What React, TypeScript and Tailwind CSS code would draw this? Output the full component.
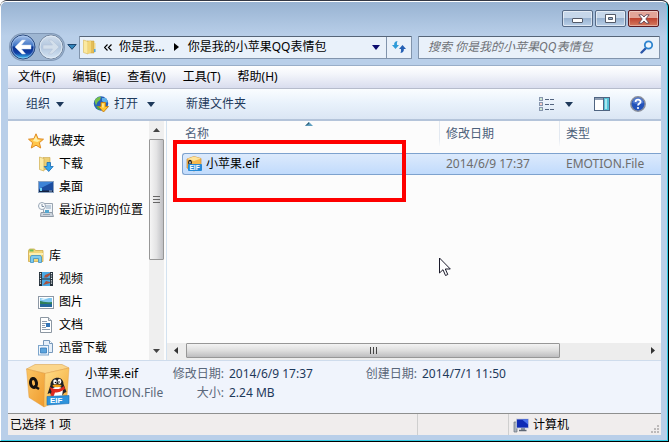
import type { ReactNode } from "react";

type NavItem = { label: string; icon: ReactNode };

function Caret({ className = "text-[#1e395b]" }: { className?: string }) {
  return (
    <svg width="8" height="5" viewBox="0 0 8 5" className={className} aria-hidden="true">
      <path d="M0 0h8L4 5z" fill="currentColor" />
    </svg>
  );
}

function BackIcon() {
  return (
    <svg width="26" height="26" viewBox="0 0 26 26" aria-hidden="true">
      <defs>
        <linearGradient id="back" x1="0" y1="0" x2="0" y2="1">
          <stop offset="0" stopColor="#a9c4ec" />
          <stop offset=".45" stopColor="#3f74c4" />
          <stop offset=".5" stopColor="#0b3591" />
          <stop offset=".75" stopColor="#123fa5" />
          <stop offset="1" stopColor="#3fd0fa" />
        </linearGradient>
      </defs>
      <circle cx="13" cy="13" r="12" fill="url(#back)" stroke="#2a4a80" />
      <circle cx="13" cy="13" r="11" fill="none" stroke="#b8d2f3" strokeOpacity=".55" />
      <path d="M5 13l7-7h3.500l-4 5H21v4h-9.500l4 5H12z" fill="#fff" stroke="#c9d8ee" strokeWidth=".5" />
    </svg>
  );
}

function ForwardIcon() {
  return (
    <svg width="26" height="26" viewBox="0 0 26 26" aria-hidden="true">
      <defs>
        <linearGradient id="fwd" x1="0" y1="0" x2="0" y2="1">
          <stop offset="0" stopColor="#d3dfed" />
          <stop offset=".5" stopColor="#b1c6de" />
          <stop offset="1" stopColor="#d6e5f4" />
        </linearGradient>
      </defs>
      <circle cx="13" cy="13" r="12" fill="url(#fwd)" stroke="#75879f" />
      <circle cx="13" cy="13" r="11" fill="none" stroke="#e6eff8" strokeOpacity=".8" />
      <path d="M21 13l-7-7h-3.500l4 5H5v4h9.500l-4 5H14z" fill="#d3dfeb" stroke="#b5c5d8" strokeWidth=".6" />
    </svg>
  );
}

function FolderIcon() {
  return (
    <svg width="16" height="16" viewBox="0 0 16 16" aria-hidden="true">
      <path d="M5 2h7v12H5z" fill="#e3bd58" stroke="#c79d3a" strokeWidth=".5" />
      <path d="M12 4h1.500v9H12z" fill="#f0d98c" />
      <path d="M12 10h1.500v3H12z" fill="#4ea5e6" />
      <path d="M1.500 1L6 2.500V15l-4.500-1.500z" fill="#fbe9a0" stroke="#d8b658" strokeWidth=".6" />
      <path d="M6 2.500l3-1v12L6 15z" fill="#f3d678" />
    </svg>
  );
}

function RefreshIcon() {
  return (
    <svg width="14" height="14" viewBox="0 0 14 14" aria-hidden="true">
      <path d="M5.500 1C2.500 1.500 2 3 2.200 5H0l3.500 4L7 5H5c-.2-1.600 0-2.800.5-4z" fill="#2f9bd8" />
      <path d="M8.500 13c3-.5 3.500-2 3.300-4H14l-3.500-4L7 9h2c.2 1.600 0 2.800-.5 4z" fill="#2560b4" />
    </svg>
  );
}

function SearchIcon() {
  return (
    <svg width="14" height="14" viewBox="0 0 14 14" aria-hidden="true">
      <path d="M6 8L1.500 12.500" stroke="#2b56a8" strokeWidth="2.400" strokeLinecap="round" />
      <circle cx="8.500" cy="5" r="3.700" fill="#eef6fd" stroke="#2e84cf" strokeWidth="1.800" />
    </svg>
  );
}

function GlobeIcon() {
  return (
    <svg width="17" height="17" viewBox="0 0 17 17" aria-hidden="true">
      <circle cx="8" cy="7.500" r="7.200" fill="#2760b8" />
      <path d="M1.500 5C3 1.500 6 .5 8 .8L7 4 4.500 6 3 9.500z" fill="#75c04a" />
      <path d="M9 2l4 0 2 4-3 1-3-2z" fill="#5eb0e8" />
      <path d="M3 10l3 0 1 4-2-.5z" fill="#4fa544" />
      <path d="M8 6.500h4.500v4h3L10.500 16 5.500 10.500H8z" fill="#ffc52f" stroke="#c77e12" strokeWidth=".9" />
      <path d="M9.200 7.500h1.500v4H9.200z" fill="#fff0a8" />
    </svg>
  );
}

function ViewIcon() {
  return (
    <svg width="16" height="14" viewBox="0 0 16 14" aria-hidden="true">
      {[0.5, 5.5, 10.5].map((y, i) => (
        <g key={y}>
          <rect x=".5" y={y} width="3" height="3" fill="#fff" stroke="#8796ad" />
          <rect x="1.500" y={y + 1} width="1" height="1" fill={i === 1 ? "#d23c2c" : "#3f9a52"} />
          <path d={`M6 ${y + 2}h4M11 ${y + 2}h4`} stroke="#52647f" />
        </g>
      ))}
    </svg>
  );
}

function PaneIcon() {
  return (
    <svg width="16" height="14" viewBox="0 0 16 14" aria-hidden="true">
      <rect x=".5" y=".5" width="15" height="13" fill="#fff" stroke="#4f6481" />
      <path d="M1 2h14" stroke="#8d9db3" strokeWidth="2" />
      <rect x="10" y="1" width="5" height="12" fill="#55c2d7" />
      <path d="M11 2h2v10h-2z" fill="#aae7ef" />
      <path d="M9.500 1v12" stroke="#4f6481" />
    </svg>
  );
}

function HelpIcon() {
  return (
    <svg width="16" height="16" viewBox="0 0 16 16" aria-hidden="true">
      <circle cx="8" cy="8" r="7.200" fill="#2352ba" stroke="#8a8f9c" strokeWidth="1.500" />
      <path d="M2.500 7a5.500 5.500 0 0 1 11 0c-3 1.300-7 1.300-11 0z" fill="#6f94df" fillOpacity=".6" />
      <path d="M5.600 6c0-3.200 5-3 5-.3C10.600 7.500 8 7.400 8 9.500" fill="none" stroke="#fff" strokeWidth="1.800" />
      <circle cx="8" cy="12" r="1.100" fill="#fff" />
    </svg>
  );
}

function StarIcon() {
  return (
    <svg width="16" height="16" viewBox="0 0 16 16" aria-hidden="true">
      <path d="M8 .8l2.100 4.900 5.400.5-4.100 3.500 1.300 5.300L8 12.200 3.300 15l1.300-5.300L.5 6.200l5.400-.5z" fill="#ffc64a" stroke="#e08a20" strokeLinejoin="round" />
      <path d="M8 3l1.300 3.600 3.200.3-3 2L5 8z" fill="#fff0a6" />
    </svg>
  );
}

function DownloadFolderIcon() {
  return (
    <svg width="16" height="16" viewBox="0 0 16 16" aria-hidden="true">
      <path d="M5 1.500h7v12H5z" fill="#ecce74" stroke="#c9a548" strokeWidth=".6" />
      <path d="M1.500 1L6 2.500V15l-4.500-1.500z" fill="#fbeaa6" stroke="#d0ae50" strokeWidth=".7" />
      <path d="M9 6.500h3.500v4h2.700L10.700 15.500 6.200 10.500H9z" fill="#35a4ee" stroke="#1769b4" strokeWidth=".8" />
    </svg>
  );
}

function DesktopIcon() {
  return (
    <svg width="16" height="16" viewBox="0 0 16 16" aria-hidden="true">
      <rect x=".5" y="2.500" width="15" height="11" fill="#1c4da0" stroke="#8ca3c1" />
      <path d="M1 3h14L1 10z" fill="#3d83d6" />
      <path d="M1 11.500h14v1.500H1z" fill="#12213e" />
      <path d="M2 9h2v3H2z" fill="#75d6f6" />
      <path d="M11 12h3" stroke="#9db8dc" />
    </svg>
  );
}

function RecentIcon() {
  return (
    <svg width="16" height="16" viewBox="0 0 16 16" aria-hidden="true">
      <path d="M5.500 1.500h9v10h-9z" fill="#f0f4f8" stroke="#9aa5b1" />
      <path d="M7 4h6M8 6h5" stroke="#8ea7bf" />
      <path d="M3 10.500h11l1.500 4h-13z" fill="#cdd5de" stroke="#8f9aa7" />
      <path d="M7 8h4v3H7z" fill="#55a7cf" />
      <path d="M5 12.500h7" stroke="#98a4b0" />
      <circle cx="4" cy="4" r="3.500" fill="#f8fbfd" stroke="#9aa7b6" />
      <path d="M4 2v2.500h2" fill="none" stroke="#61758b" strokeWidth=".8" />
    </svg>
  );
}

function LibraryIcon() {
  return (
    <svg width="16" height="16" viewBox="0 0 16 16" aria-hidden="true">
      <path d="M.5 2.500l1-1.500h5l1 1.500h7.500v11H.5z" fill="#f2d777" stroke="#cfa94a" strokeWidth=".8" />
      <path d="M1.500 1.500h4v2h-4z" fill="#70bd55" />
      <path d="M1 5h14v2H1z" fill="#fcefb2" />
      <path d="M2.500 14.500V9l1-1.500h9l1 1.500v5.500h-3v-4h-5v4z" fill="#7ecbee" stroke="#3d92c4" strokeWidth=".8" />
    </svg>
  );
}

function VideoIcon() {
  return (
    <svg width="16" height="16" viewBox="0 0 16 16" aria-hidden="true">
      <path d="M1 1h14v14H1z" fill="#25313b" />
      <path d="M2.500 2v12M13.500 2v12" stroke="#e8eef2" strokeWidth="1.200" strokeDasharray="1.200 1.200" />
      <path d="M4 1h8v6.500H4zM4 8.500h8V15H4z" fill="#4ba9e4" />
      <path d="M7 4l5-2v2L9 6.500H6zM5 14l3-4 4 1v1z" fill="#a9513c" />
    </svg>
  );
}

function PictureIcon() {
  return (
    <svg width="16" height="16" viewBox="0 0 16 16" aria-hidden="true">
      <rect x=".5" y="2.500" width="15" height="12" fill="#fff" stroke="#8d98a5" />
      <path d="M2 4h12v9H2z" fill="#7fc6f0" />
      <path d="M2 7c3 0 5 2 12 1v2H2z" fill="#2d7f5b" />
      <path d="M2 10h12v3H2z" fill="#23669b" />
      <path d="M2 5l4-1h5l-6 2z" fill="#e5f6fd" />
    </svg>
  );
}

function DocumentIcon() {
  return (
    <svg width="16" height="16" viewBox="0 0 16 16" aria-hidden="true">
      <path d="M2.500.5h8l3 3v12h-11z" fill="#fff" stroke="#8c97a2" />
      <path d="M10.500.5v3h3" fill="#dde4ea" stroke="#8c97a2" />
      <path d="M4 4.500h5M4 6.500h4M4 8.500h3M4 10.500h4M4 12.500h8" stroke="#8f9eb0" />
      <path d="M8 6h4v4H8z" fill="#3475b8" />
    </svg>
  );
}

function ThunderIcon() {
  return (
    <svg width="16" height="16" viewBox="0 0 16 16" aria-hidden="true">
      <path d="M5.500.5h6l3 3v9h-9z" fill="#e6f0fa" stroke="#7798ba" />
      <path d="M11.500.5v3h3" fill="#fff" stroke="#7798ba" />
      <rect x=".5" y="5.500" width="10" height="9.500" fill="#eef6fd" stroke="#7ea6cc" />
      <path d="M2.500 8h6v5h-6z" fill="#5ba4dd" stroke="#3679b8" strokeWidth=".8" />
    </svg>
  );
}

function EifIcon({ className }: { className: string }) {
  return (
    <svg viewBox="0 0 44 44" className={className} aria-hidden="true">
      <defs>
        <linearGradient id="boxLeft" x1="0" y1="0" x2="1" y2="1">
          <stop offset="0" stopColor="#fbc665" />
          <stop offset="1" stopColor="#ef9a2c" />
        </linearGradient>
        <linearGradient id="boxRight" x1="0" y1="0" x2="1" y2="1">
          <stop offset="0" stopColor="#ffdf8c" />
          <stop offset="1" stopColor="#f3a733" />
        </linearGradient>
      </defs>
      <path d="M.5 5L9 .5h27l7 3.500-24 5.500z" fill="#fbd68c" stroke="#dba552" strokeWidth=".6" />
      <path d="M.5 5L19 9.500 18 43 3 33.500z" fill="url(#boxLeft)" stroke="#dd9638" strokeWidth=".4" />
      <path d="M19 9.500L43 4l-2 29-23 10z" fill="url(#boxRight)" stroke="#dd9638" strokeWidth=".4" />
      <ellipse cx="7.500" cy="19" rx="3" ry="4.500" fill="none" stroke="#17130f" strokeWidth="3" transform="rotate(-10 7.500 19)" />
      <path d="M8 22l5 3" stroke="#17130f" strokeWidth="2.500" />
      <path d="M24.500 21c0-9 13-10 13-1l3 8-2.500 1c-2 5-12 5-14 0l-2.500 1z" fill="#202126" />
      <path d="M26 25c3-3 8-3 11 0l-1 8h-9z" fill="#fff" />
      <ellipse cx="29" cy="18" rx="1.800" ry="2.400" fill="#fff" />
      <ellipse cx="33.500" cy="17.500" rx="1.800" ry="2.400" fill="#fff" />
      <circle cx="29.500" cy="18.500" r=".8" />
      <circle cx="33" cy="18" r=".8" />
      <ellipse cx="31" cy="21.800" rx="4.500" ry="1.400" fill="#f5a117" />
      <path d="M23.500 22.500c5 4 11 3 14.500-.5l1 3c-4 3-8 3.500-10 3.500l-1.500 4-3-1 1-4z" fill="#e02a20" />
      <path d="M21 32.500l22-1v8l-22 1.500z" fill="#2d93dc" stroke="#1a6db4" strokeWidth=".6" />
      <text x="24" y="39" fontSize="8" fontWeight="700" fill="#fff" fontFamily="Liberation Sans, sans-serif">
        EIF
      </text>
    </svg>
  );
}

function SmallEifIcon() {
  return (
    <svg width="17" height="16" viewBox="0 0 17 16" aria-hidden="true">
      <path d="M1 3l7-2.500 7 2v9L8 15l-7-3z" fill="#f6b84c" stroke="#cc882a" strokeWidth=".7" />
      <path d="M1 3l7-2.500 7 2-7 2.500z" fill="#ffe39a" />
      <ellipse cx="4" cy="6.500" rx="1.300" ry="2" fill="#fff" stroke="#1b1712" strokeWidth="1.300" />
      <rect x="2" y="8" width="14" height="7" rx="1" fill="#2589d6" />
      <text x="3.500" y="14" fontSize="6.500" fontWeight="700" fill="#fff" fontFamily="Liberation Sans, sans-serif">
        EIF
      </text>
    </svg>
  );
}

function ComputerIcon() {
  return (
    <svg width="16" height="16" viewBox="0 0 16 16" aria-hidden="true">
      <path d="M1 5h3v10H1z" fill="#aab2bd" stroke="#6c7480" strokeWidth=".7" />
      <rect x="3.500" y="2" width="12" height="9" fill="#0f2bb5" stroke="#c5cddb" strokeWidth=".8" />
      <path d="M9 2.500h6v5z" fill="#4b72ec" />
      <path d="M8 11h4v2H8z" fill="#8a94a3" />
      <path d="M6 13.500h7.500" stroke="#5c6674" strokeWidth="1.500" />
    </svg>
  );
}

const favorites: NavItem[] = [
  { label: "下载", icon: <DownloadFolderIcon /> },
  { label: "桌面", icon: <DesktopIcon /> },
  { label: "最近访问的位置", icon: <RecentIcon /> },
];

const libraries: NavItem[] = [
  { label: "视频", icon: <VideoIcon /> },
  { label: "图片", icon: <PictureIcon /> },
  { label: "文档", icon: <DocumentIcon /> },
  { label: "迅雷下载", icon: <ThunderIcon /> },
];

const menus = ["文件(F)", "编辑(E)", "查看(V)", "工具(T)", "帮助(H)"];

function TitleBar() {
  const button =
    "flex h-[17px] w-[31px] items-center justify-center rounded-[2px] border border-[#566a86] bg-linear-to-b from-[#c6d7ea] from-45% via-[#98b2d0] via-50% to-[#bad0e8] shadow-[inset_0_0_0_1px_#ffffff88]";
  return (
    <header className="flex h-8 justify-end gap-[2px] pt-2 pr-[2px]">
      <button type="button" aria-label="最小化" className={button}>
        <span className="mt-1 h-[5px] w-[11px] rounded-[1px] border border-[#535a68] bg-white" />
      </button>
      <button type="button" aria-label="最大化" className={button}>
        <svg width="11" height="9" viewBox="0 0 11 9" aria-hidden="true">
          <path d="M.5.500h10v8H.5zM3.500 3.500h4v2h-4z" fill="#fff" fillRule="evenodd" stroke="#535a68" />
        </svg>
      </button>
      <button
        type="button"
        aria-label="关闭"
        className="flex h-[17px] w-[31px] items-center justify-center rounded-[2px] border border-[#5b1a22] bg-linear-to-b from-[#e3a498] from-45% via-[#bf4330] via-50% to-[#d47a60] shadow-[inset_0_0_0_1px_#ffffff66]"
      >
        <svg width="12" height="10" viewBox="0 0 12 10" aria-hidden="true">
          <path d="M.8.800h3.200l2 2.200 2-2.200h3.200L7.800 5l3.400 4.200H8L6 7 4 9.200H.8L4.200 5z" fill="#fff" stroke="#5c4250" strokeWidth=".9" />
        </svg>
      </button>
    </header>
  );
}

function AddressRow() {
  return (
    <div className="flex items-center pr-px pl-[2px]">
      <nav className="flex w-[69px] shrink-0 items-center" aria-label="导航">
        <div className="flex gap-[2px] rounded-full bg-[#9eb6d2] shadow-[0_0_0_1px_#8198b6]">
          <button type="button" aria-label="后退">
            <BackIcon />
          </button>
          <button type="button" aria-label="前进">
            <ForwardIcon />
          </button>
        </div>
        <button type="button" aria-label="最近页面" className="ml-[3px]">
          <svg width="10" height="6" viewBox="0 0 10 6" aria-hidden="true">
            <path d="M.8.500h8.400L5 5.300z" fill="#3286bd" stroke="#1d4670" />
          </svg>
        </button>
      </nav>
      <div className="mr-[6px] flex h-[23px] w-[333px] shrink-0 rounded-[1px] border border-[#8194ac] border-t-[#566578] bg-[#e9f1fa]">
        <div className="flex flex-1 items-center pl-[2px]">
          <FolderIcon />
          <button type="button" aria-label="上级目录" className="ml-[6px]">
            <svg width="8" height="7" viewBox="0 0 8 7" aria-hidden="true">
              <path d="M3.500.5l-3 3 3 3M7.500.5l-3 3 3 3" fill="none" stroke="#000" strokeWidth="1.200" />
            </svg>
          </button>
          <button type="button" className="ml-[7px]">
            你是我...
          </button>
          <svg width="5" height="8" viewBox="0 0 5 8" className="mx-[9px]" aria-hidden="true">
            <path d="M0 0v8l5-4z" />
          </svg>
          <button type="button">你是我的小苹果QQ表情包</button>
          <button type="button" aria-label="历史记录" className="mr-[6px] ml-auto">
            <Caret className="text-[#0b0b6e]" />
          </button>
        </div>
        <button type="button" aria-label="刷新" className="flex w-[25px] items-center justify-center border-l border-[#8194ac]">
          <RefreshIcon />
        </button>
      </div>
      <label className="flex h-[23px] min-w-0 flex-1 items-center rounded-[1px] border border-[#8194ac] border-t-[#566578] bg-[#e9f1fa] pr-[5px] pl-[9px]">
        <input
          type="search"
          aria-label="搜索"
          placeholder="搜索 你是我的小苹果QQ表情包"
          className="min-w-0 flex-1 bg-transparent italic outline-none placeholder:text-[#6f7277]"
        />
        <SearchIcon />
      </label>
    </div>
  );
}

function Toolbar() {
  return (
    <div className="flex h-8 items-center border-b-2 border-[#b4c4da] bg-linear-to-b from-[#fafdff] via-[#e8f1fb] via-50% to-[#dbe6f4] pr-[15px] pl-[18px] text-[#1e395b]">
      <button type="button" className="flex items-center gap-[6px]">
        组织
        <Caret />
      </button>
      <button type="button" className="ml-[29px] flex items-center gap-1">
        <GlobeIcon />
        打开
      </button>
      <button type="button" aria-label="打开方式" className="ml-[9px]">
        <Caret />
      </button>
      <button type="button" className="ml-[31px]">
        新建文件夹
      </button>
      <div className="ml-auto flex items-center">
        <button type="button" aria-label="更改视图">
          <ViewIcon />
        </button>
        <button type="button" aria-label="更多选项" className="ml-[10px]">
          <Caret />
        </button>
        <button type="button" aria-label="预览窗格" className="ml-[21px]">
          <PaneIcon />
        </button>
        <button type="button" aria-label="帮助" className="ml-5">
          <HelpIcon />
        </button>
      </div>
    </div>
  );
}

function NavGroup({ label, icon, items }: NavItem & { items: NavItem[] }) {
  return (
    <li>
      <a href="#" className="flex h-[23px] items-center gap-[5px] pl-5">
        {icon}
        {label}
      </a>
      <ul>
        {items.map((item) => (
          <li key={item.label}>
            <a href="#" className="flex h-[23px] items-center gap-[5px] pl-[30px] whitespace-nowrap">
              {item.icon}
              {item.label}
            </a>
          </li>
        ))}
      </ul>
    </li>
  );
}

function NavPane() {
  return (
    <aside className="flex w-[159px] shrink-0 border-r border-[#d3e2f0] pr-[2px]">
      <ul className="flex flex-1 flex-col gap-[23px] pt-2">
        <NavGroup label="收藏夹" icon={<StarIcon />} items={favorites} />
        <NavGroup label="库" icon={<LibraryIcon />} items={libraries} />
      </ul>
      <div className="flex w-[15px] flex-col items-center bg-[#efefef]">
        <svg width="7" height="4" viewBox="0 0 7 4" className="my-[7px]" aria-hidden="true">
          <path d="M0 4h7L3.500 0z" fill="#444" />
        </svg>
        <div className="flex h-[121px] w-full flex-col items-center justify-center gap-[2px] rounded-[1px] border border-[#979797] bg-linear-to-r from-[#f5f5f5] via-[#e3e3e4] to-[#bfc0c4]">
          <span className="h-px w-[7px] bg-[#666]" />
          <span className="h-px w-[7px] bg-[#666]" />
          <span className="h-px w-[7px] bg-[#666]" />
        </div>
        <svg width="7" height="4" viewBox="0 0 7 4" className="mt-auto mb-[7px]" aria-hidden="true">
          <path d="M0 0h7L3.500 4z" fill="#444" />
        </svg>
      </div>
    </aside>
  );
}

function FileList() {
  const header = "h-[25px] pl-[6px] text-left font-normal";
  const cell = "h-[22px] border-y border-[#7da2ce] bg-linear-to-b from-[#dceafc] to-[#c1dbfc] pl-[7px]";
  const divider =
    "border-l [border-image:linear-gradient(to_bottom,#e3e9f1_70%,transparent)_1]";
  return (
    <main className="flex min-w-0 flex-1 flex-col">
      <div className="flex-1 pl-[15px]">
        <table className="w-full table-fixed border-separate border-spacing-0">
          <thead className="text-[#4c607a]">
            <tr>
              <th scope="col" className="relative h-[25px] w-[257px] pl-[3px] text-left font-normal">
                名称
                <svg width="8" height="4" viewBox="0 0 8 4" className="absolute top-[1px] left-[123px]" aria-hidden="true">
                  <path d="M0 4h8L4 0z" fill="#5f9fbf" />
                  <path d="M0 4l4-4v2z" fill="#2d5872" />
                </svg>
              </th>
              <th scope="col" className={`${header} ${divider} w-[120px]`}>
                修改日期
              </th>
              <th scope="col" className={`${header} ${divider}`}>
                类型
              </th>
            </tr>
          </thead>
          <tbody className="text-[#6d6d6d]">
            <tr aria-hidden="true">
              <td colSpan={3} className="h-[7px] p-0" />
            </tr>
            <tr aria-selected="true">
              <td className="h-[22px] rounded-l-[3px] border-y border-l border-[#7da2ce] bg-linear-to-b from-[#dceafc] to-[#c1dbfc] pl-[3px] text-black">
                <div className="flex items-center gap-[3px]">
                  <SmallEifIcon />
                  小苹果.eif
                </div>
              </td>
              <td className={cell}>2014/6/9 17:37</td>
              <td className={`${cell} whitespace-nowrap`}>EMOTION.File</td>
            </tr>
          </tbody>
        </table>
      </div>
      <div className="flex h-[17px] items-start bg-[#ededed]">
        <svg width="4" height="7" viewBox="0 0 4 7" className="mt-1 mr-[8px] ml-[7px]" aria-hidden="true">
          <path d="M4 0v7L0 3.500z" fill="#333" />
        </svg>
        <div className="flex h-[15px] w-[374px] items-center justify-center gap-[2px] rounded-[1px] border border-[#979797] bg-linear-to-b from-[#f3f3f3] via-[#dedede] to-[#bdbdbf]">
          <span className="h-[7px] w-px bg-[#444]" />
          <span className="h-[7px] w-px bg-[#444]" />
          <span className="h-[7px] w-px bg-[#444]" />
        </div>
        <svg width="4" height="7" viewBox="0 0 4 7" className="mt-1 mr-[6px] ml-auto" aria-hidden="true">
          <path d="M0 0v7l4-3.500z" fill="#333" />
        </svg>
      </div>
    </main>
  );
}

function DetailsPane() {
  return (
    <section className="flex h-[53px] border-t border-[#cfdcec] bg-[#f0f4fc] pt-[3px] pl-[18px] leading-[19px]">
      <EifIcon className="size-11 shrink-0" />
      <div className="ml-[15px] w-[88px] text-[#5a6779]">
        <h2 className="text-black">小苹果.eif</h2>
        <p>EMOTION.File</p>
      </div>
      <dl className="grid w-[193px] grid-cols-[51px_1fr] content-start gap-x-[5px] whitespace-nowrap text-[#1e395b]">
        <dt className="flex justify-end text-[#5a6779]">修改日期:</dt>
        <dd>2014/6/9 17:37</dd>
        <dt className="flex justify-end text-[#5a6779]">大小:</dt>
        <dd>2.24 MB</dd>
      </dl>
      <dl className="grid grid-cols-[51px_1fr] content-start gap-x-[5px] whitespace-nowrap text-[#1e395b]">
        <dt className="flex justify-end text-[#5a6779]">创建日期:</dt>
        <dd>2014/7/1 11:50</dd>
      </dl>
    </section>
  );
}

function StatusBar() {
  return (
    <footer className="flex h-[22px] items-stretch border-t border-[#8e8f8f] bg-[#f0eded]">
      <p className="flex flex-1 items-center pl-[2px]">已选择 1 项</p>
      <div className="w-[91px] border-l border-[#cfcfcf]" />
      <p className="flex w-[153px] items-center gap-1 border-l border-[#cfcfcf] pl-1">
        <ComputerIcon />
        计算机
        <svg width="8" height="8" viewBox="0 0 8 8" className="mr-[2px] mb-[2px] ml-auto self-end" aria-hidden="true">
          <path d="M6 0h2v2H6zM3 3h2v2H3zM6 3h2v2H6zM0 6h2v2H0zM3 6h2v2H3zM6 6h2v2H6z" fill="#bcb9b9" />
        </svg>
      </p>
    </footer>
  );
}

export default function App() {
  return (
    <div className="relative flex min-h-screen flex-col bg-[linear-gradient(#fff_30px,#000_30px)] font-['Noto_Sans','Noto_Sans_CJK_SC',sans-serif] text-[12px] leading-4 text-black">
      <div className="flex flex-1 flex-col rounded-t-[7px] border-t border-[#333845] bg-black pr-px pb-px">
        <div className="flex flex-1 flex-col rounded-t-[6px] border border-[#31cbe4] border-t-white border-l-white bg-[#b9d1ea] bg-[linear-gradient(#98b3d2,#b9cfe9_34px,#b9cfe9)] pr-[6px] pb-[5px] pl-[7px]">
          <TitleBar />
          <AddressRow />
          <div className="mt-[5px] flex flex-1 flex-col">
            <div className="flex h-6 items-center gap-[17px] border-y border-t-[#99aec8] border-b-[#b6bccc] bg-linear-to-b from-white via-[#f4f6fb] via-35% to-[#d9ddee] pl-[10px]">
              {menus.map((menu) => (
                <button type="button" key={menu}>
                  {menu}
                </button>
              ))}
            </div>
            <Toolbar />
            <div className="flex flex-1 bg-[#fcfcfc]">
              <NavPane />
              <FileList />
            </div>
            <DetailsPane />
            <StatusBar />
          </div>
        </div>
      </div>
      <div className="pointer-events-none absolute top-[140px] left-[173px] h-[62px] w-[233px] border-4 border-[#fe0000]" />
      <svg width="13" height="20" viewBox="0 0 13 20" className="pointer-events-none absolute top-[257px] left-[439px]" aria-hidden="true">
        <path d="M.5 1v15l3.500-3.300L6.500 18.500l2.300-1L6.300 12h5z" fill="#fff" stroke="#1b1b2b" />
      </svg>
    </div>
  );
}
